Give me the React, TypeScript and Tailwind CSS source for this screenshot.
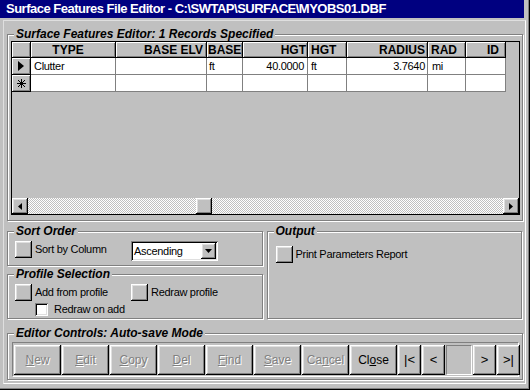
import * as React from "react";

const raised =
  "shadow-[inset_-1px_-1px_#000,inset_1px_1px_#fff,inset_-2px_-2px_#808080,inset_2px_2px_#dfdfdf]";
const sunken =
  "shadow-[inset_1px_1px_#808080,inset_-1px_-1px_#fff,inset_2px_2px_#000,inset_-2px_-2px_#dfdfdf]";
const body = "text-[11px] tracking-[-0.3px] leading-[14px]";

const GroupBox: React.FC<{ title: string; className?: string; children?: React.ReactNode }> = ({
  title,
  className = "",
  children,
}) => (
  <div className={`relative border border-[#808080] shadow-[inset_1px_1px_#fff,1px_1px_#fff] ${className}`}>
    <span className="absolute -top-[8px] left-[6px] bg-[#c0c0c0] px-[2px] text-[12px] font-bold italic leading-[14px] text-black">
      {title}
    </span>
    {children}
  </div>
);

const ToggleBox: React.FC<{ label: string }> = ({ label }) => (
  <div className="flex items-start">
    <div className={`h-[17px] w-[17px] bg-[#c0c0c0] ${raised}`} />
    <span className={`ml-[3px] mt-[1px] ${body}`}>{label}</span>
  </div>
);

type Col = { title: string; w: string; align: string };

const columns: Col[] = [
  { title: "TYPE", w: "w-[85px]", align: "justify-center pr-[10px]" },
  { title: "BASE ELV", w: "w-[91px]", align: "justify-end pr-[3px]" },
  { title: "BASE", w: "w-[36px]", align: "justify-start pl-[1px]" },
  { title: "HGT", w: "w-[65px]", align: "justify-end pr-[1px]" },
  { title: "HGT", w: "w-[39px]", align: "justify-start pl-[3px]" },
  { title: "RADIUS", w: "w-[81px]", align: "justify-end pr-[2px]" },
  { title: "RAD", w: "w-[38px]", align: "justify-start pl-[3px]" },
  { title: "ID", w: "w-[40px]", align: "justify-end pr-[6px]" },
];

const rowData = ["Clutter", "", "ft", "40.0000", "ft", "3.7640", "mi", ""];
const dataAlign = [
  "justify-start pl-[3px]",
  "justify-end pr-[3px]",
  "justify-start pl-[2px]",
  "justify-end pr-[3px]",
  "justify-start pl-[3px]",
  "justify-end pr-[2px]",
  "justify-start pl-[4px]",
  "justify-end pr-[3px]",
];

const headCell = "shadow-[inset_1px_1px_#fff,inset_-1px_-1px_#808080] border-r border-b border-black bg-[#c0c0c0]";

const DataRow: React.FC<{ values: string[]; marker: "current" | "new" }> = ({ values, marker }) => (
  <div className="flex h-[17px]">
    <div className={`flex w-[19px] items-center justify-center ${headCell}`}>
      {marker === "current" ? (
        <svg width="6" height="10" viewBox="0 0 6 10">
          <polygon points="0,0 6,5 0,10" fill="#000" />
        </svg>
      ) : (
        <svg width="9" height="9" viewBox="0 0 9 9" stroke="#000" strokeWidth="1">
          <line x1="4.5" y1="0" x2="4.5" y2="9" />
          <line x1="0" y1="4.5" x2="9" y2="4.5" />
          <line x1="1" y1="1" x2="8" y2="8" />
          <line x1="8" y1="1" x2="1" y2="8" />
        </svg>
      )}
    </div>
    {columns.map((c, i) => (
      <div
        key={i}
        className={`flex items-center border-r border-b border-[#808080] bg-white ${c.w} ${dataAlign[i]} ${body}`}
      >
        {values[i]}
      </div>
    ))}
  </div>
);

const Arrow: React.FC<{ dir: "left" | "right" | "down" }> = ({ dir }) => {
  if (dir === "down")
    return (
      <svg width="7" height="4" viewBox="0 0 7 4">
        <polygon points="0,0 7,0 3.5,4" fill="#000" />
      </svg>
    );
  return (
    <svg width="4" height="7" viewBox="0 0 4 7">
      <polygon points={dir === "left" ? "4,0 4,7 0,3.5" : "0,0 0,7 4,3.5"} fill="#000" />
    </svg>
  );
};

const Grid: React.FC = () => (
  <div className="ml-[3px] mt-[6px] flex h-[174px] w-[509px] flex-col border border-black bg-[#c0c0c0]">
    <div className="flex h-[16px]">
      <div className={`w-[19px] ${headCell}`} />
      {columns.map((c, i) => (
        <div
          key={i}
          className={`flex items-center text-[12px] font-bold leading-[14px] ${c.w} ${c.align} ${headCell}`}
        >
          {c.title}
        </div>
      ))}
    </div>
    <DataRow values={rowData} marker="current" />
    <DataRow values={["", "", "", "", "", "", "", ""]} marker="new" />
    <div className="flex-1" />
    <div className="flex h-[16px]">
      <div className={`flex w-[16px] items-center justify-center bg-[#c0c0c0] ${raised}`}>
        <Arrow dir="left" />
      </div>
      <div className="flex flex-1 bg-[repeating-conic-gradient(#fff_0%_25%,#c0c0c0_0%_50%)] bg-[length:2px_2px]">
        <div className={`ml-[168px] h-[16px] w-[16px] bg-[#c0c0c0] ${raised}`} />
      </div>
      <div className={`flex w-[16px] items-center justify-center bg-[#c0c0c0] ${raised}`}>
        <Arrow dir="right" />
      </div>
    </div>
  </div>
);

const CmdButton: React.FC<{ pre?: string; u: string; post: string; enabled?: boolean }> = ({
  pre = "",
  u,
  post,
  enabled,
}) => (
  <div
    className={`flex h-[30px] w-[47px] items-center justify-center bg-[#c0c0c0] text-[12px] ${raised} ${
      enabled ? "text-black" : "text-[#808080] [text-shadow:1px_1px_#fff]"
    }`}
  >
    <span>
      {pre}
      <u>{u}</u>
      {post}
    </span>
  </div>
);

const NavButton: React.FC<{ label: string }> = ({ label }) => (
  <div className={`flex h-[30px] w-[23px] items-center justify-center bg-[#c0c0c0] text-[13px] ${raised}`}>
    {label}
  </div>
);

export default function App() {
  return (
    <div className="flex h-[390px] w-[530px] flex-col overflow-hidden bg-[#c0c0c0] font-['Liberation_Sans',Arial,sans-serif] text-black shadow-[inset_-1px_-1px_#000,inset_-2px_-2px_#808080]">
      <div className="h-[18px] w-[524px] bg-[#000080] pl-[6px] text-[13px] font-bold leading-[18px] tracking-[-0.5px] text-white">
        Surface Features File Editor - C:\SWTAP\SURFACE\MYOBS01.DBF
      </div>
      <div className="ml-[3px] mt-[2px] flex h-[364px] w-[523px] flex-col border border-[#dfdfdf] border-r-white border-b-white px-[3px]">
        <GroupBox title="Surface Features Editor: 1 Records Specified" className="mt-[13px] h-[187px] w-[516px]">
          <Grid />
        </GroupBox>

        <div className="mt-[10px] flex gap-[4px]">
          <div className="flex w-[256px] flex-col">
            <GroupBox title="Sort Order" className="h-[35px]">
              <div className="ml-[7px] mt-[9px] flex items-start">
                <div className="w-[116px]">
                  <ToggleBox label="Sort by Column" />
                </div>
                <div className={`flex h-[20px] w-[87px] items-center bg-white ${sunken}`}>
                  <span className={`flex-1 pl-[3px] ${body}`}>Ascending</span>
                  <div className={`mr-[2px] flex h-[16px] w-[15px] items-center justify-center bg-[#c0c0c0] ${raised}`}>
                    <Arrow dir="down" />
                  </div>
                </div>
              </div>
            </GroupBox>
            <GroupBox title="Profile Selection" className="mt-[8px] h-[45px]">
              <div className="ml-[7px] mt-[9px] flex">
                <div className="w-[116px]">
                  <ToggleBox label="Add from profile" />
                </div>
                <ToggleBox label="Redraw profile" />
              </div>
              <div className="ml-[27px] mt-[1px] flex items-center">
                <div className={`h-[13px] w-[13px] bg-white ${sunken}`} />
                <span className={`ml-[6px] ${body}`}>Redraw on add</span>
              </div>
            </GroupBox>
          </div>
          <GroupBox title="Output" className="h-[88px] w-[256px]">
            <div className="ml-[8px] mt-[14px]">
              <ToggleBox label="Print Parameters Report" />
            </div>
          </GroupBox>
        </div>

        <GroupBox title="Editor Controls: Auto-save Mode" className="mt-[14px] h-[47px] w-[516px]">
          <div className="ml-[4px] mt-[8px] flex h-[35px] w-[507px] items-center border border-[#808080] border-r-white border-b-white pl-[1px]">
            <div className="flex gap-[1px]">
              <CmdButton u="N" post="ew" />
              <CmdButton u="E" post="dit" />
              <CmdButton u="C" post="opy" />
              <CmdButton u="D" post="el" />
              <CmdButton u="F" post="ind" />
              <CmdButton u="S" post="ave" />
              <CmdButton pre="Ca" u="n" post="cel" />
              <CmdButton pre="Cl" u="o" post="se" enabled />
              <NavButton label="|<" />
              <NavButton label="<" />
              <div className="h-[30px] w-[26px] border border-[#808080] border-r-white border-b-white" />
              <NavButton label=">" />
              <NavButton label=">|" />
            </div>
          </div>
        </GroupBox>
      </div>
    </div>
  );
}
